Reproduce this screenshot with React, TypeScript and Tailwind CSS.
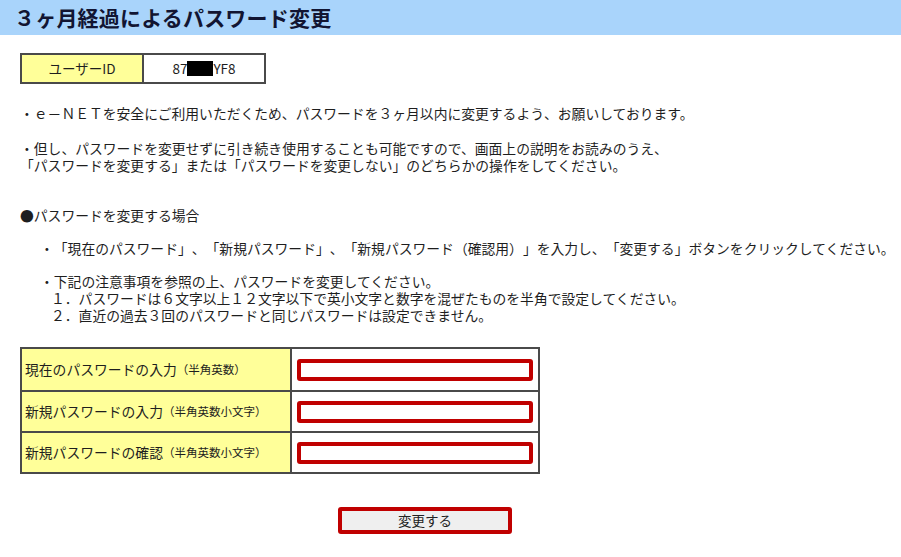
export default function App() {
  const rows = [
    { label: '現在のパスワードの入力', note: '（半角英数）' },
    { label: '新規パスワードの入力', note: '（半角英数小文字）' },
    { label: '新規パスワードの確認', note: '（半角英数小文字）' },
  ]

  return (
    <div className="min-h-screen bg-white font-['Noto_Sans_CJK_JP',sans-serif] [text-spacing-trim:space-all] text-[13.8px] leading-[17px] text-[#1e1e1e]">
      {/* タイトル */}
      <div className="h-[35px] bg-[#a9d4fb] pl-[14px] flex items-center">
        <h1 className="text-[21px] font-bold tracking-[0.2px] text-[#121532]">３ヶ月経過によるパスワード変更</h1>
      </div>

      <div className="pl-[20px]">
        {/* ユーザーID */}
        <div className="mt-[18px] flex w-[246px] h-[31px] border-2 border-[#4a4a4a] text-[13.5px]">
          <div className="w-[122px] bg-[#ffff99] border-r-2 border-[#4a4a4a] flex items-center justify-center">
            ユーザーID
          </div>
          <div className="flex-1 flex items-center justify-center">
            <span>87</span>
            <span className="inline-block w-[26px] h-[15px] bg-black" />
            <span>YF8</span>
          </div>
        </div>

        {/* 説明 */}
        <p className="mt-[21px]">・ｅ－ＮＥＴを安全にご利用いただくため、パスワードを３ヶ月以内に変更するよう、お願いしております。</p>
        <p className="mt-[18px]">
          ・但し、パスワードを変更せずに引き続き使用することも可能ですので、画面上の説明をお読みのうえ、
          <br />
          「パスワードを変更する」または「パスワードを変更しない」のどちらかの操作をしてください。
        </p>

        <p className="mt-[33px]">●パスワードを変更する場合</p>
        <p className="mt-[16px] pl-[20px]">
          ・「現在のパスワード」、「新規パスワード」、「新規パスワード（確認用）」を入力し、「変更する」ボタンをクリックしてください。
        </p>
        <div className="mt-[16px] pl-[20px]">
          <p>・下記の注意事項を参照の上、パスワードを変更してください。</p>
          <p className="pl-[11px]">１．パスワードは６文字以上１２文字以下で英小文字と数字を混ぜたものを半角で設定してください。</p>
          <p className="pl-[11px]">２．直近の過去３回のパスワードと同じパスワードは設定できません。</p>
        </div>

        {/* 入力フォーム */}
        <div className="mt-[23px] w-[520px] border-2 border-[#4a4a4a]">
          {rows.map((row, i) => (
            <div
              key={row.label}
              className={`grid grid-cols-[270px_1fr] h-[41px] ${i > 0 ? 'border-t-2 border-[#4a4a4a]' : ''}`}
            >
              <div className="bg-[#ffff99] border-r-2 border-[#4a4a4a] pl-[3px] flex items-center">
                <span>{row.label}</span>
                <span className="text-[11.5px]">{row.note}</span>
              </div>
              <div className="flex items-center pl-[5px] pr-[5px]">
                <input
                  type="password"
                  className="w-full h-[22px] border-[4px] border-[#c00000] rounded-[3px] bg-white outline-none"
                />
              </div>
            </div>
          ))}
        </div>

        {/* ボタン */}
        <button
          type="button"
          className="mt-[33px] ml-[318px] w-[174px] h-[27px] bg-[#efefef] border-[4px] border-[#c00000] rounded-[3px] text-[13.5px] text-[#222] flex items-center justify-center"
        >
          変更する
        </button>
      </div>
    </div>
  )
}
